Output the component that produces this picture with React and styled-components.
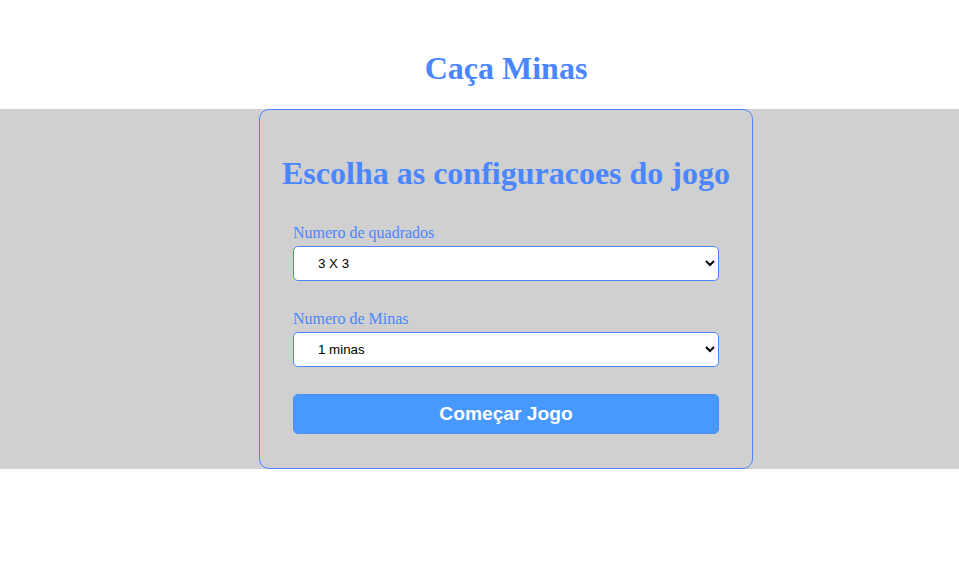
import React from "react";
import styled, { createGlobalStyle } from "styled-components";

const Global = createGlobalStyle`
  html, body { margin: 0; padding: 0; background: #ffffff; }
  body { font-family: "Liberation Serif", "Times New Roman", serif; }
`;

const Page = styled.div`
  display: flex;
  flex-direction: column;
  width: 100%;
`;

const Header = styled.header`
  display: flex;
  justify-content: center;
  padding: 50px 0 22px 53px;
`;

const Title = styled.h1`
  margin: 0;
  font-family: "Liberation Serif", "Times New Roman", serif;
  font-size: 32px;
  line-height: 37px;
  font-weight: 700;
  color: #4a86ff;
`;

const Band = styled.main`
  display: flex;
  justify-content: center;
  background: #d0d0d0;
  padding-left: 53px;
`;

const Card = styled.section`
  width: 426px;
  padding: 45px 33px 34px;
  border: 1px solid #4a86ff;
  border-radius: 10px;
  display: flex;
  flex-direction: column;
`;

const Heading = styled.h2`
  margin: 0 -30px;
  text-align: center;
  font-family: "Liberation Serif", "Times New Roman", serif;
  font-size: 32px;
  line-height: 37px;
  font-weight: 700;
  color: #4a86ff;
  white-space: nowrap;
`;

const Field = styled.div`
  display: flex;
  flex-direction: column;
  margin-top: ${(p) => p.$top}px;
`;

const Label = styled.label`
  font-family: "Liberation Serif", "Times New Roman", serif;
  font-size: 16px;
  line-height: 18px;
  color: #4a86ff;
  margin-bottom: 4px;
`;

const Select = styled.select`
  height: 35px;
  width: 100%;
  box-sizing: border-box;
  padding: 0 6px 0 20px;
  background: #ffffff;
  border: 1px solid #4a86ff;
  border-radius: 5px;
  font-family: "Liberation Sans", Arial, sans-serif;
  font-size: 13.33px;
  color: #000;
  outline: none;
`;

const Button = styled.button`
  margin-top: 27px;
  height: 40px;
  width: 100%;
  border: 1px solid #4a90f5;
  border-radius: 5px;
  background: #4799ff;
  color: #ffffff;
  font-family: "Liberation Sans", Arial, sans-serif;
  font-weight: 700;
  font-size: 19.2px;
  cursor: pointer;
`;

export default function App() {
  return (
    <Page>
      <Global />
      <Header>
        <Title>Caça Minas</Title>
      </Header>
      <Band>
        <Card>
          <Heading>Escolha as configuracoes do jogo</Heading>
          <Field $top={32}>
            <Label htmlFor="quadrados">Numero de quadrados</Label>
            <Select id="quadrados" defaultValue="3">
              <option value="3">3 X 3</option>
              <option value="4">4 X 4</option>
              <option value="5">5 X 5</option>
            </Select>
          </Field>
          <Field $top={29}>
            <Label htmlFor="minas">Numero de Minas</Label>
            <Select id="minas" defaultValue="1">
              <option value="1">1 minas</option>
              <option value="2">2 minas</option>
              <option value="3">3 minas</option>
            </Select>
          </Field>
          <Button>Começar Jogo</Button>
        </Card>
      </Band>
    </Page>
  );
}
